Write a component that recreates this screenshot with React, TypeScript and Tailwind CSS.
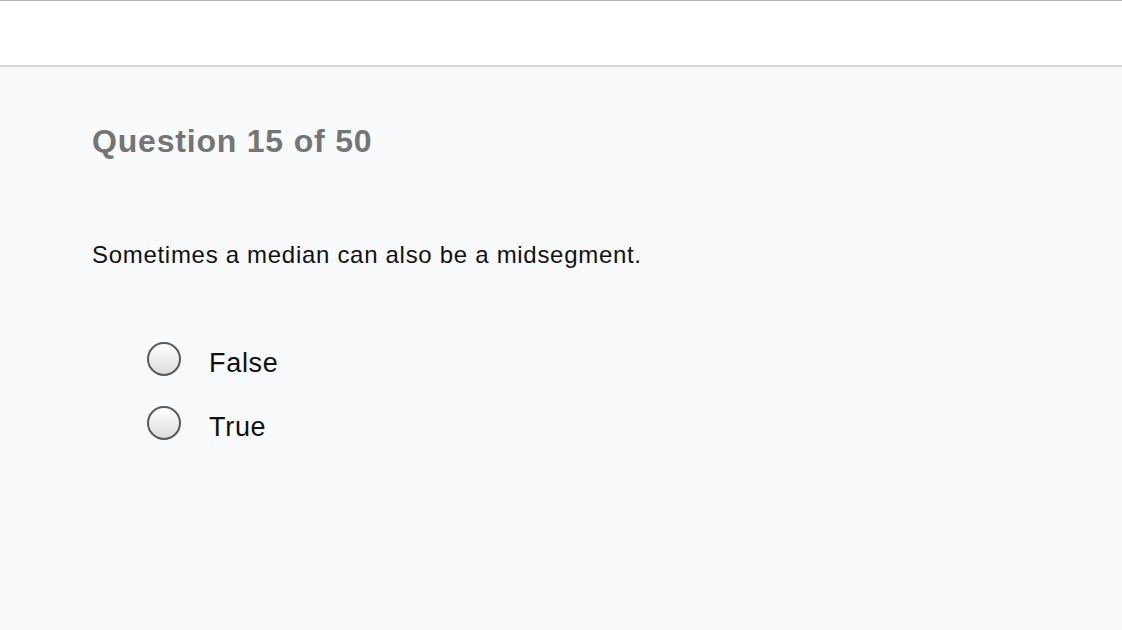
import React from "react";

function Radio() {
  return (
    <span className="block w-[34px] h-[34px] shrink-0 rounded-full border-2 border-[#5a5a5a] bg-gradient-to-b from-[#ffffff] to-[#dcdcdc]" />
  );
}

export default function App() {
  const options = ["False", "True"];
  return (
    <div
      className="w-[1122px] h-[630px] overflow-hidden flex flex-col bg-[#f9fafc]"
      style={{ fontFamily: '"Liberation Sans", Arial, sans-serif' }}
    >
      <div className="h-[67px] shrink-0 bg-white border-t border-t-[#b4b4b4] border-b-2 border-b-[#d8d8d8]" />
      <div className="pl-[92px] pt-[58px] flex flex-col">
        <h1 className="text-[32px] leading-[32px] font-bold text-[#757575] tracking-[0.8px]">
          Question 15 of 50
        </h1>
        <p className="mt-[86px] text-[24px] leading-[24px] text-[#111111] tracking-[0.7px]">
          Sometimes a median can also be a midsegment.
        </p>
        <div className="mt-[75px] pl-[55px] flex flex-col gap-[29px]">
          {options.map((o) => (
            <label key={o} className="flex items-start gap-[28px]">
              <Radio />
              <span className="mt-[8px] text-[27px] leading-[27px] text-[#111111] tracking-[0.7px]">
                {o}
              </span>
            </label>
          ))}
        </div>
      </div>
    </div>
  );
}
